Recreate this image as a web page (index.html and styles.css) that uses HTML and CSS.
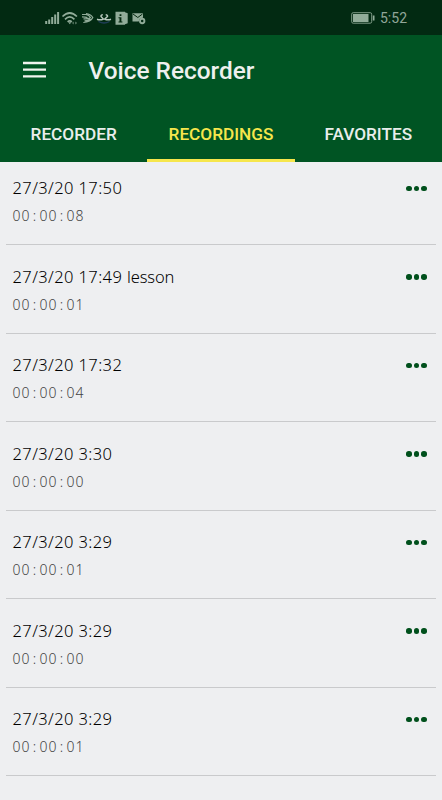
FILE: index.html
```
<!DOCTYPE html>
<html lang="en">
<head>
    <meta charset="UTF-8">
    <meta name="viewport" content="width=device-width, initial-scale=1.0">
    <title>Voice Recorder</title>
    <link rel="stylesheet" href="styles.css">
</head>
<body>
    <div class="status-bar">
        <svg class="status-icons" width="102" height="16" viewBox="0 0 102 16">
            <!-- signal -->
            <path d="M1.200 14v-3M4.200 14V9.500M7.200 14V7M10.200 14V4.500M13.100 14V2" stroke="#91ac99" stroke-width="2" fill="none"/>
            <!-- wifi -->
            <path d="M17.500 6.500q7.200-7 14.400 0M20 9.300q4.700-4.800 9.400 0M22.600 11.800q2.200-2 4.200 0" stroke="#91ac99" stroke-width="1.700" fill="none"/>
            <path d="M23.200 12.200h3.200l-1.600 2zM27.300 13l1.200-1.500v3zM31.800 13l-1.300-1.500v3z" fill="#91ac99"/>
            <!-- swift arrows -->
            <path d="M37 4.500h4q3 .5 4.500 3-2 1.800-7 1.300M41 3.500q4.500.5 6.800 4-2 4.500-9.500 5M37 6.800q3.500 0 5.500.8M39.500 10.800q4 0 6-2" stroke="#91ac99" stroke-width="1.200" fill="none"/>
            <!-- swans -->
            <path d="M52 9.300q3.500 1.200 6.300-.2l-2.300-2.600q-.2-1.700 1.800-1.700M66 9.300q-3.500 1.200-6.300-.2l2.800-2.600q.2-1.700-1.800-1.700" stroke="#b5c6bb" stroke-width="1.500" fill="none"/>
            <path d="M53.500 11.500q5.500 3 11 0" stroke="#203d58" stroke-width="1.300" fill="none"/>
            <!-- info book -->
            <path d="M70.500 1.800h9.500v13h-9.500zM80 2.300l2.700 1v9.900l-2.700 1z" fill="#91ac99"/>
            <path d="M74.600 4.300h1.800v1.600h-1.800zM73.500 7.200h2.900v4.300h1v1h-3.900v-1h1V8.200h-1z" fill="#04280f"/>
            <!-- mail -->
            <path d="M87.500 3.200h10.500v4.600q-4 0-4.200 3.700h-6.300z" fill="#91ac99"/>
            <path d="M88 4l4.800 3.500L97.500 4" stroke="#04280f" fill="none"/>
            <circle cx="97.200" cy="11" r="2.200" stroke="#91ac99" stroke-width="1.900" fill="none"/>
        </svg>
        <div class="status-right">
            <svg width="24" height="12" viewBox="0 0 24 12">
                <rect x=".7" y=".7" width="20" height="10.500" rx="1.500" fill="none" stroke="#7f9a87"/>
                <path d="M2 2h15.500v8H2zM21.800 3.500h1.700v5h-1.700z" fill="#91ac99"/>
            </svg>
            <span class="clock">5:52</span>
        </div>
    </div>
    <header class="toolbar">
        <svg class="menu" width="23" height="17" viewBox="0 0 23 17">
            <path d="M0 2h23M0 8.700h23M0 15.400h23" stroke="#f0f4ee" stroke-width="2.300"/>
        </svg>
        <h1>Voice Recorder</h1>
    </header>
    <nav class="tabs">
        <a class="tab">RECORDER</a>
        <a class="tab active">RECORDINGS</a>
        <a class="tab">FAVORITES</a>
    </nav>
    <div class="list">
        <div class="item">
            <div>
                <p class="name">27/3/20 17:50</p>
                <p class="time">00<span>:</span>00<span>:</span>08</p>
            </div>
            <div class="more"><i></i><i></i><i></i></div>
        </div>
        <div class="item">
            <div>
                <p class="name">27/3/20 17:49 <span class="label">lesson</span></p>
                <p class="time">00<span>:</span>00<span>:</span>01</p>
            </div>
            <div class="more"><i></i><i></i><i></i></div>
        </div>
        <div class="item">
            <div>
                <p class="name">27/3/20 17:32</p>
                <p class="time">00<span>:</span>00<span>:</span>04</p>
            </div>
            <div class="more"><i></i><i></i><i></i></div>
        </div>
        <div class="item">
            <div>
                <p class="name">27/3/20 3:30</p>
                <p class="time">00<span>:</span>00<span>:</span>00</p>
            </div>
            <div class="more"><i></i><i></i><i></i></div>
        </div>
        <div class="item">
            <div>
                <p class="name">27/3/20 3:29</p>
                <p class="time">00<span>:</span>00<span>:</span>01</p>
            </div>
            <div class="more"><i></i><i></i><i></i></div>
        </div>
        <div class="item">
            <div>
                <p class="name">27/3/20 3:29</p>
                <p class="time">00<span>:</span>00<span>:</span>00</p>
            </div>
            <div class="more"><i></i><i></i><i></i></div>
        </div>
        <div class="item">
            <div>
                <p class="name">27/3/20 3:29</p>
                <p class="time">00<span>:</span>00<span>:</span>01</p>
            </div>
            <div class="more"><i></i><i></i><i></i></div>
        </div>
    </div>
</body>
</html>
```
FILE: styles.css
```
* {
    box-sizing: border-box;
}
body {
    margin: 0;
    height: 800px;
    overflow: hidden;
    background-color: #eeeff1;
    font-family: Roboto, sans-serif;
}
p, h1 {
    margin: 0;
}
.status-bar {
    display: flex;
    justify-content: space-between;
    align-items: center;
    height: 35px;
    padding: 0 35px 0 45px;
    background: #022a12;
}
.status-right {
    display: flex;
    align-items: center;
    gap: 5px;
}
.clock {
    color: #91a698;
    font-size: 14px;
    line-height: 16px;
}
.toolbar {
    display: flex;
    align-items: center;
    height: 70px;
    padding-left: 23px;
    background: #005423;
}
.menu {
    margin: 0 42.500px 1px 0;
}
h1 {
    padding-top: 1px;
    color: #eef0ee;
    font-size: 24.400px;
    font-weight: 500;
    line-height: 30px;
}
.tabs {
    display: flex;
    height: 57px;
    background: #005423;
}
.tab {
    flex: 1;
    padding-top: 18px;
    color: #e9eeeb;
    font-size: 17.200px;
    font-weight: 500;
    line-height: 22px;
    text-align: center;
}
.active {
    color: #f6e64c;
    border-bottom: 3px solid #f6e64c;
}
.list {
    padding: 0 6px;
    margin-top: -5.500px;
}
.item {
    display: flex;
    justify-content: space-between;
    height: 88.500px;
    padding: 19.500px 9.500px 0 6.500px;
    border-bottom: 1px solid #c9cacc;
}
.name {
    color: #000;
    font-family: "Noto Sans", sans-serif;
    font-size: 16.500px;
    font-weight: 300;
    letter-spacing: .4px;
    line-height: 24px;
}
.label {
    letter-spacing: -.1px;
}
.time {
    margin-top: 4px;
    color: #444;
    font-family: "Noto Sans", sans-serif;
    font-size: 14px;
    font-weight: 300;
    letter-spacing: 1px;
    line-height: 24px;
}
.time span {
    display: inline-block;
    width: 9px;
    text-align: center;
}
.more {
    display: flex;
    gap: 2px;
    padding-top: 9.500px;
}
.more i {
    width: 5.500px;
    height: 5.500px;
    border-radius: 50%;
    background: #00501c;
}
```
